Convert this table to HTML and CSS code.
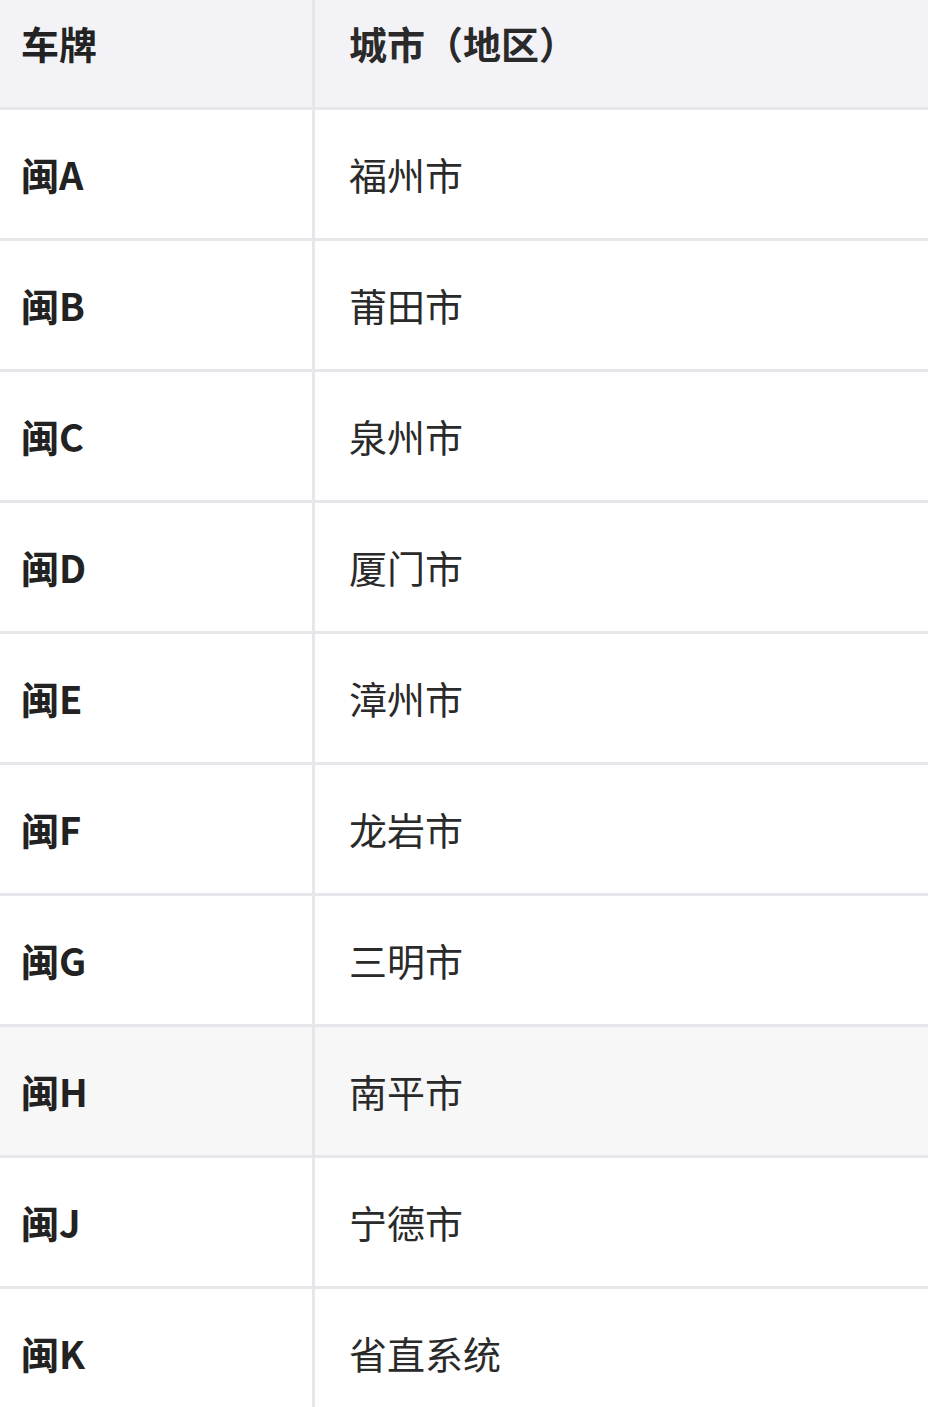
FILE: index.html
```html
<!DOCTYPE html>
<html lang="zh-CN">
<head>
<meta charset="utf-8">
<link rel="stylesheet" href="styles.css">
</head>
<body>
<div class="table">
  <div class="row head"><div class="cell c1">车牌</div><div class="cell c2">城市（地区）</div></div>
  <div class="row"><div class="cell c1">闽A</div><div class="cell c2">福州市</div></div>
  <div class="row"><div class="cell c1">闽B</div><div class="cell c2">莆田市</div></div>
  <div class="row"><div class="cell c1">闽C</div><div class="cell c2">泉州市</div></div>
  <div class="row"><div class="cell c1">闽D</div><div class="cell c2">厦门市</div></div>
  <div class="row"><div class="cell c1">闽E</div><div class="cell c2">漳州市</div></div>
  <div class="row"><div class="cell c1">闽F</div><div class="cell c2">龙岩市</div></div>
  <div class="row"><div class="cell c1">闽G</div><div class="cell c2">三明市</div></div>
  <div class="row hl"><div class="cell c1">闽H</div><div class="cell c2">南平市</div></div>
  <div class="row"><div class="cell c1">闽J</div><div class="cell c2">宁德市</div></div>
  <div class="row"><div class="cell c1">闽K</div><div class="cell c2">省直系统</div></div>
</div>
</body>
</html>
```
FILE: styles.css
```css
html, body {
  margin: 0;
  padding: 0;
  background: #ffffff;
}
body {
  font-family: "Noto Sans CJK SC", "Noto Sans", sans-serif;
  color: #222222;
  overflow: hidden;
}
.table {
  width: 928px;
}
.row {
  display: grid;
  grid-template-columns: 315px 1fr;
  height: 131px;
  box-sizing: border-box;
  border-bottom: 3px solid #e7e7eb;
}
.row.head {
  height: 110px;
  background: #f3f3f7;
}
.row.hl {
  background: #f7f7f8;
}
.cell {
  display: flex;
  align-items: center;
  font-size: 38px;
  line-height: 1;
}
.c1 {
  padding-left: 21px;
  font-weight: 700;
  border-right: 3px solid #e7e7eb;
}
.c2 {
  padding-left: 34px;
  font-weight: 400;
  color: #2a2a2a;
}
.head .cell {
  font-weight: 700;
  padding-bottom: 22px;
}
```
